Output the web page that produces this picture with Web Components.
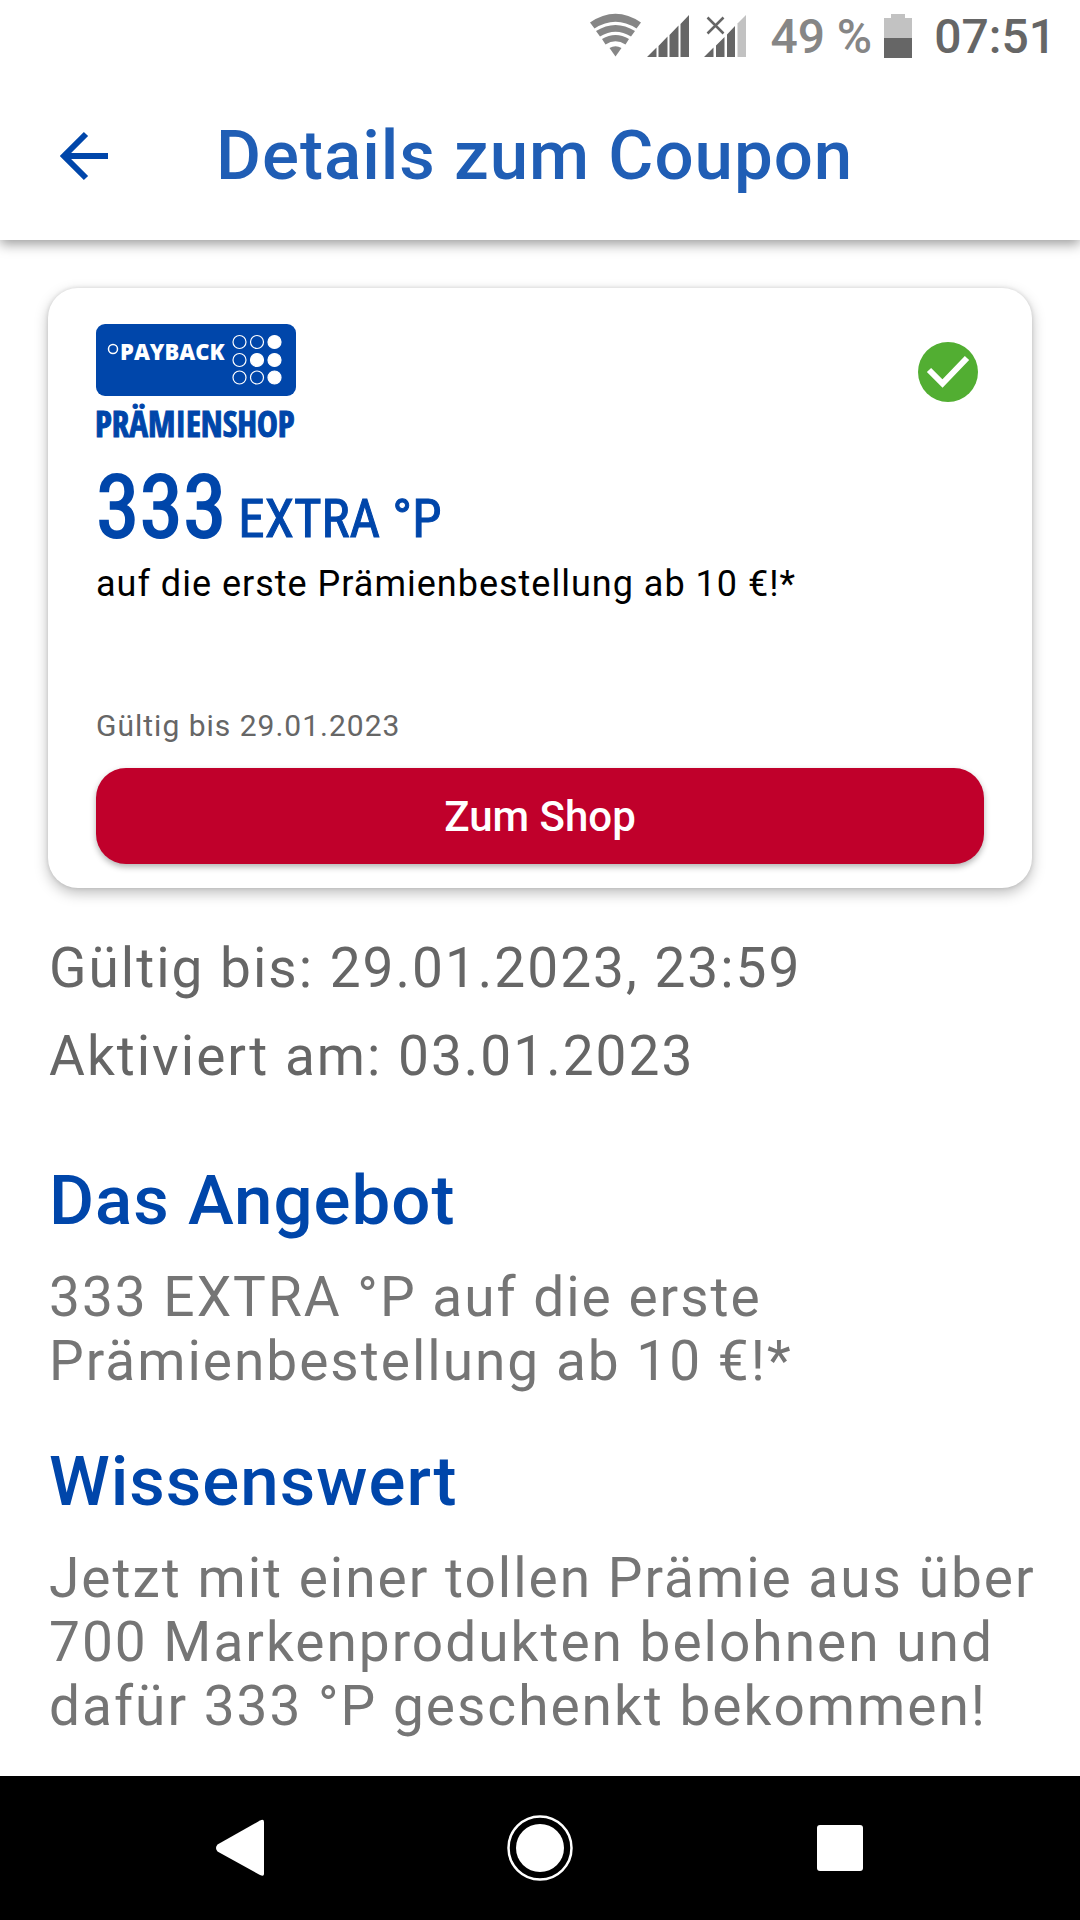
<!DOCTYPE html>
<html lang="de">
<head>
<meta charset="utf-8">
<meta name="viewport" content="width=device-width, initial-scale=1">
<title>Details zum Coupon</title>
<style>
  :root { --blue: #0046aa; --grey: #666; --body: #757575; }
  html, body { margin: 0; min-height: 100vh; }
  body { display: flex; flex-direction: column; background: #fff; font-family: Roboto, "Liberation Sans", sans-serif; color: var(--grey); }
  coupon-screen { flex: 1; }
</style>
</head>
<body>
<coupon-screen></coupon-screen>
<script>
function define(name, markup) {
  const template = document.createElement('template');
  template.innerHTML = markup;
  customElements.define(name, class extends HTMLElement {
    constructor() {
      super();
      this.attachShadow({ mode: 'open' }).appendChild(template.content.cloneNode(true));
    }
  });
}

define('status-bar', `
  <style>
    :host { display: flex; justify-content: flex-end; align-items: center; height: 72px; padding-right: 24px; background: #fff; position: relative; z-index: 2; font-size: 48px; line-height: 56px; font-weight: 500; color: #666; }
    svg { display: block; flex: none; }
    span { padding-top: 2px; }
    .percent { color: #868686; margin: 0 12px 0 24px; }
    .time { margin-left: 22px; }
  </style>
  <svg width="158" height="60" viewBox="588 6 158 60" role="img" aria-label="WLAN und Mobilfunk">
    <g fill="#868686">
      <path d="M590 22.500Q615.500 5 641 22.500L636.500 28.500Q615.500 15 594.500 28.500Z"/>
      <path d="M596 31Q615.500 19 635 31L631 36.500Q615.500 27 600 36.500Z"/>
      <path d="M602 39Q615.500 31 629 39L625.500 44.500Q615.500 38 605.500 44.500Z"/>
      <path d="M609.500 48Q615.500 44.500 621.500 48L615.500 56.500Z"/>
    </g>
    <path fill="#666" d="M647 57L656.500 47.500V57ZM658.500 57V46L667.500 36.500V57ZM669.500 57V35L678.500 25.500V57ZM680.500 57V24L689 15V57Z"/>
    <path fill="#666" d="M704 57L713.500 47.500V57ZM716 57V45.500L724.500 37V57ZM727 57V34.500L735 26V57Z"/>
    <path fill="#c2c2c2" d="M737.500 57V23.500L746 15V57Z"/>
    <path d="M707.500 17.500L723.500 33.500M723.500 17.500L707.500 33.500" stroke="#666" stroke-width="2.500"/>
  </svg>
  <span class="percent">49 %</span>
  <svg width="28" height="60" viewBox="0 6 28 60" role="img" aria-label="Akku">
    <path fill="#c2c2c2" d="M7 14H21V18H28V38H0V18H7Z"/><path fill="#666" d="M0 38H28V58H0Z"/>
  </svg>
  <span class="time">07:51</span>
`);

define('app-bar', `
  <style>
    :host { display: flex; align-items: center; height: 168px; padding-left: 48px; gap: 96px; background: #fff; box-shadow: 0 4px 12px rgba(0,0,0,.4); position: relative; z-index: 1; }
    button { flex: none; display: grid; place-items: center; width: 72px; height: 72px; padding: 0; border: 0; background: none; }
    h1 { margin: 0; font-size: 69px; line-height: 80px; font-weight: 500; letter-spacing: 1px; color: #205eb5; }
  </style>
  <button type="button" aria-label="Zurück">
    <svg width="72" height="72" viewBox="48 120 72 72" fill="none" stroke="#0046aa" stroke-width="6"><path d="M108 156H65M86 134L64 156L86 178"/></svg>
  </button>
  <h1><slot></slot></h1>
`);

define('partner-logo', `
  <style>
    :host { display: block; }
    svg { display: block; overflow: visible; }
    .brand { font: 800 22px "Open Sans", sans-serif; }
    .shop { font: 700 35px "Open Sans Condensed", "Roboto Condensed", "Liberation Sans Narrow", sans-serif; stroke: #0046aa; stroke-width: 1px; }
  </style>
  <svg width="216" height="120" viewBox="0 0 216 120" role="img" aria-label="Payback Prämienshop">
    <rect width="200" height="72" rx="9" fill="#0046aa"/>
    <circle cx="17" cy="25" r="4.500" fill="none" stroke="#fff" stroke-width="1.500"/>
    <text class="brand" x="24" y="36" fill="#fff">PAYBACK</text>
    <g fill="none" stroke="#fff" stroke-width="1.200">
      <circle cx="143.500" cy="18" r="6.500"/><circle cx="161" cy="18" r="6.500"/><circle cx="178.500" cy="18" r="6.500" fill="#fff"/>
      <circle cx="143.500" cy="36" r="6.500"/><circle cx="161" cy="36" r="6.500" fill="#fff"/><circle cx="178.500" cy="36" r="6.500" fill="#fff"/>
      <circle cx="143.500" cy="53.500" r="6.500"/><circle cx="161" cy="53.500" r="6.500"/><circle cx="178.500" cy="53.500" r="6.500" fill="#fff"/>
    </g>
    <text class="shop" x="-1" y="113" fill="#0046aa">PRÄMIENSHOP</text>
  </svg>
`);

define('coupon-card', `
  <style>
    :host { display: flex; flex-direction: column; padding: 36px 48px 24px; border-radius: 30px; background: #fff; box-shadow: 0 5px 14px rgba(0,0,0,.26), 0 0 4px rgba(0,0,0,.12); }
    .top { display: flex; justify-content: space-between; align-items: flex-start; }
    .check { display: block; margin: 18px 6px 0 0; }
    .value { display: flex; align-items: baseline; gap: 12px; margin: 21px 0 0; line-height: 84px; color: var(--blue); font-family: "Roboto Condensed", "Liberation Sans Narrow", Roboto, sans-serif; font-weight: 400; font-size: 53px; -webkit-text-stroke: 1px var(--blue); }
    .value strong { font-size: 88px; font-weight: 400; -webkit-text-stroke-width: 2px; }
    .offer { margin: 1px 0 0; font-size: 36px; line-height: 44px; letter-spacing: 1px; color: #000; }
    .valid { margin: 102px 0 0; font-size: 30px; line-height: 36px; letter-spacing: 1px; color: var(--grey); }
    button { margin-top: 24px; height: 96px; padding: 2px 0 0; border: 0; border-radius: 30px; background: #c0002b; color: #fff; font: 500 42px/48px Roboto, sans-serif; box-shadow: 0 3px 6px rgba(0,0,0,.3); }
  </style>
  <div class="top">
    <partner-logo></partner-logo>
    <svg class="check" width="60" height="60" viewBox="0 0 60 60" role="img" aria-label="Aktiviert"><circle cx="30" cy="30" r="30" fill="#52ae32"/><path d="M11 28L24.500 41.500L49 16" fill="none" stroke="#fff" stroke-width="6"/></svg>
  </div>
  <p class="value"><strong>333</strong><span>EXTRA °P</span></p>
  <p class="offer"><slot></slot></p>
  <p class="valid"><slot name="valid"></slot></p>
  <button type="button">Zum Shop</button>
`);

define('info-section', `
  <style>
    :host { display: block; }
    h2 { margin: 0; font-size: 69px; line-height: 80px; font-weight: 500; letter-spacing: 1px; color: var(--blue); }
    p { margin: 24px 0 0; font-size: 55px; line-height: 64px; letter-spacing: 2px; color: var(--body); }
  </style>
  <h2><slot name="title"></slot></h2>
  <p><slot></slot></p>
`);

define('nav-bar', `
  <style>
    :host { display: flex; justify-content: center; gap: 156px; align-items: center; height: 144px; background: #000; }
    button { display: grid; place-items: center; width: 144px; height: 144px; padding: 0; border: 0; background: none; }
    svg { display: block; }
  </style>
  <button type="button" aria-label="Zurück"><svg width="72" height="72" viewBox="204 1812 72 72" fill="#fff"><path d="M217.500 1844.500L260 1820.500Q264 1818.500 264 1822V1874Q264 1877 260 1875L217.500 1851.500Q214.500 1848 217.500 1844.500Z"/></svg></button>
  <button type="button" aria-label="Startseite"><svg width="72" height="72" viewBox="0 0 72 72"><circle cx="36" cy="36" r="31.500" fill="none" stroke="#fff" stroke-width="2.500"/><circle cx="36" cy="36" r="24" fill="#fff"/></svg></button>
  <button type="button" aria-label="Letzte Apps"><svg width="72" height="72" viewBox="0 0 72 72"><rect x="13" y="13" width="46" height="46" rx="3" fill="#fff"/></svg></button>
`);

define('coupon-screen', `
  <style>
    :host { display: flex; flex-direction: column; }
    main { flex: 1; padding: 48px 0 24px; }
    coupon-card { margin: 0 48px; }
    .dates { margin: 48px 0 0; padding: 0 36px 0 49px; font-size: 55px; line-height: 64px; letter-spacing: 2px; display: grid; gap: 24px; }
    .dates p { margin: 0; }
    info-section { margin: 73px 0 0; padding: 0 36px 0 49px; }
    info-section + info-section { margin-top: 49px; }
  </style>
  <status-bar></status-bar>
  <app-bar>Details zum Coupon</app-bar>
  <main>
    <coupon-card>auf die erste Prämienbestellung ab 10 €!*<span slot="valid">Gültig bis 29.01.2023</span></coupon-card>
    <div class="dates"><p>Gültig bis: 29.01.2023, 23:59</p><p>Aktiviert am: 03.01.2023</p></div>
    <info-section><span slot="title">Das Angebot</span>333 EXTRA °P auf die erste Prämienbestellung ab 10 €!*</info-section>
    <info-section><span slot="title">Wissenswert</span>Jetzt mit einer tollen Prämie aus über 700 Markenprodukten belohnen und dafür 333 °P geschenkt bekommen!</info-section>
  </main>
  <nav-bar></nav-bar>
`);
</script>
</body>
</html>
